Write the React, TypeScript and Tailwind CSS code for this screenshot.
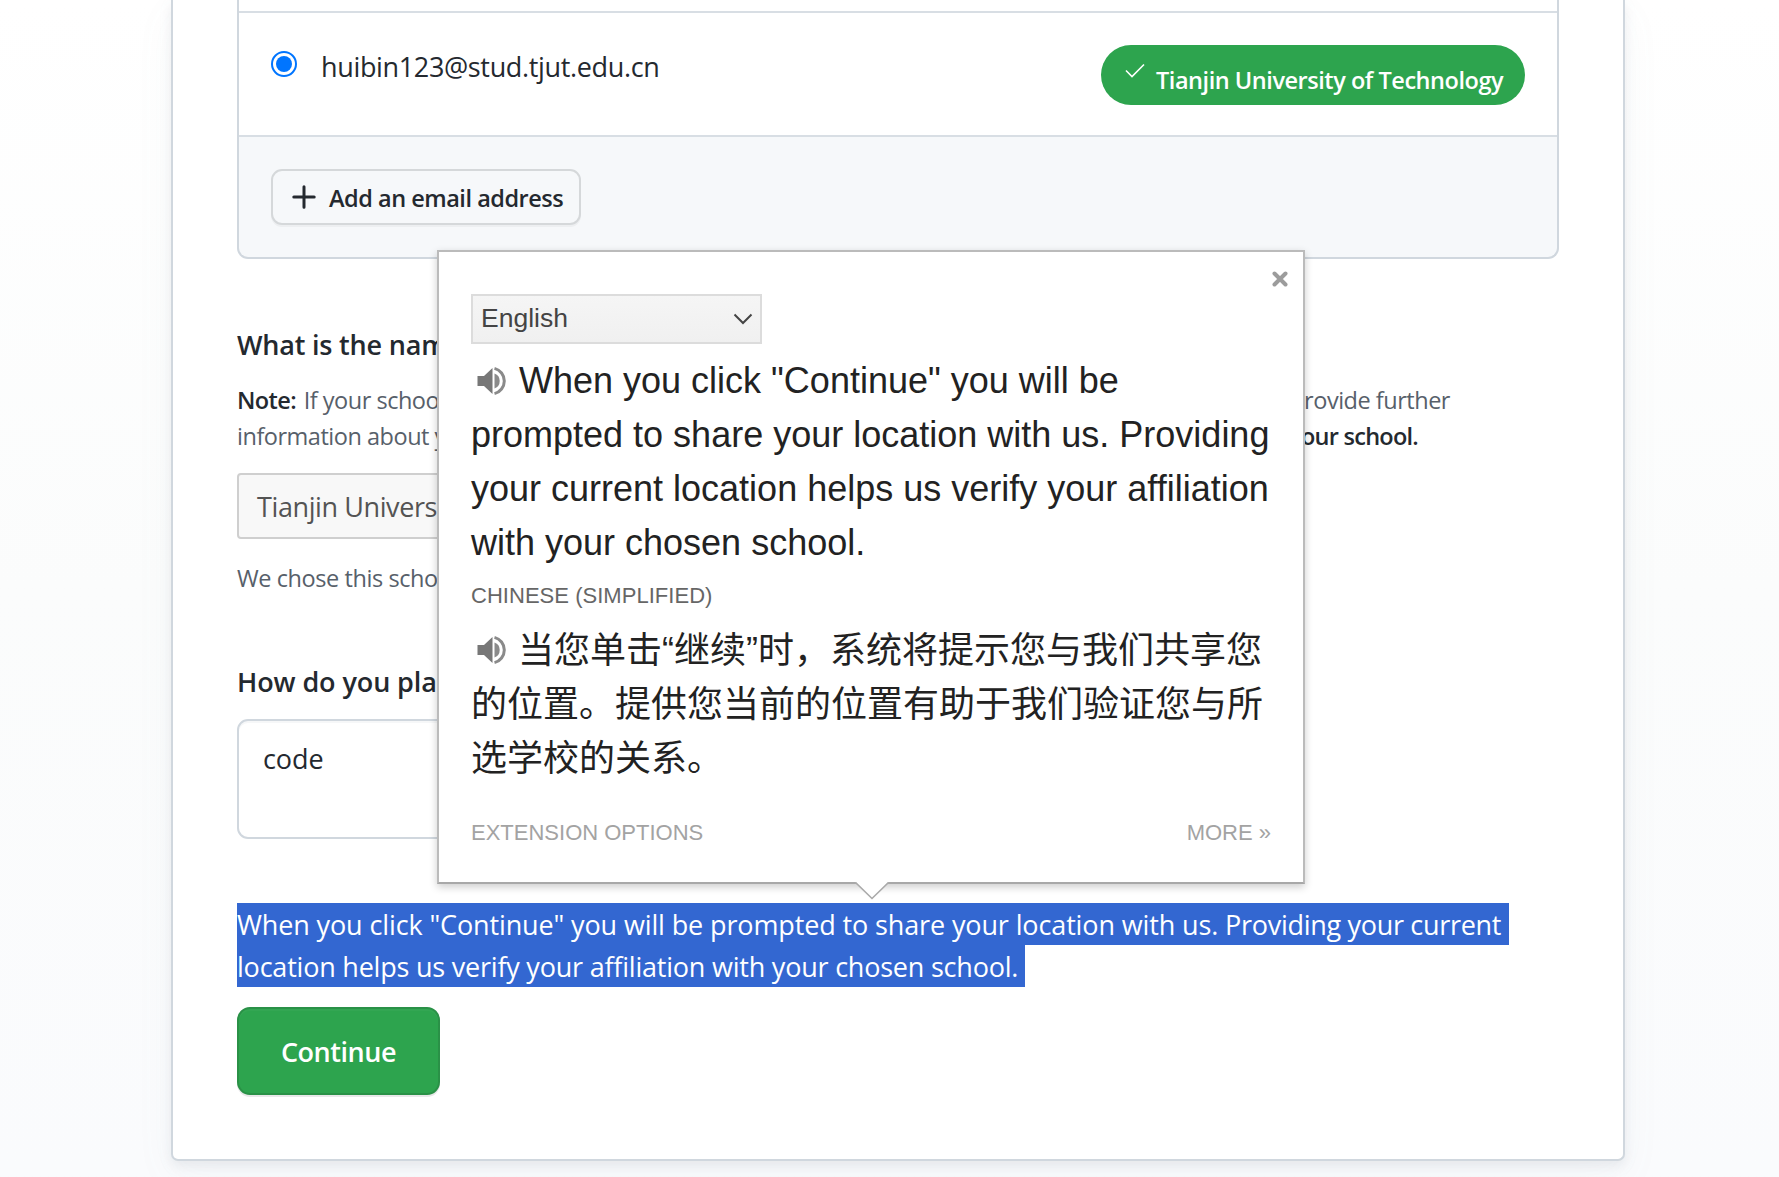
const sans = "font-['Open_Sans','Noto_Sans',sans-serif]";
const popupFont = "font-['Liberation_Sans','Noto_Sans_CJK_SC',sans-serif]";

function Speaker() {
  return (
    <svg className="mr-[10px] ml-[6px] shrink-0" width="32" height="32" viewBox="0 0 32 32" fill="none">
      <path d="M0.5 11h6.500l8.500-8v26l-8.500-8H0.500z" fill="#777" />
      <path d="M17.500 8.500a8 8 0 0 1 0 15z" fill="#8a8a8a" />
      <path d="M17.500 3.400a13 13 0 0 1 0 25.200" stroke="#8a8a8a" strokeWidth="3" />
    </svg>
  );
}

function EmailBox() {
  return (
    <div className="h-[259px] w-[1322px] overflow-hidden rounded-b-[11px] border-2 border-t-0 border-[#d0d7de] bg-[#f6f8fa]">
      <div className="h-[11px] bg-white" />
      <div className="flex h-[126px] items-start justify-between border-y-2 border-[#d8dee4] bg-white pr-[32px] pl-[32px]">
        <div className="flex items-start">
          <span className="mt-[38px] flex size-[26px] items-center justify-center rounded-full border-2 border-[#0075ff]">
            <span className="size-4 rounded-full bg-[#0075ff]" />
          </span>
          <span className="mt-[33px] ml-[24px] text-[27px] leading-[42px] tracking-[-0.35px] whitespace-nowrap">huibin123@stud.tjut.edu.cn</span>
        </div>
        <div className="mt-8 flex h-[60px] w-[424px] items-start rounded-full bg-[#2da44e] text-white">
          <svg className="mt-[18px] ml-[24px] shrink-0" width="20" height="17" viewBox="0 0 20 17" fill="none">
            <path d="M1 7.500l6 6L19 1.500" stroke="white" strokeWidth="1.6" />
          </svg>
          <span className="mt-[17px] ml-[11px] text-[23.5px] leading-[36px] font-semibold tracking-[-0.46px] whitespace-nowrap">Tianjin University of Technology</span>
        </div>
      </div>
      <div className="pt-8 pl-8">
        <button className="flex h-[56px] w-[310px] items-center rounded-[11px] border-2 border-[#d5d8da] bg-[#f6f8fa] pl-[19px] shadow-[0_2px_0_rgba(27,31,36,0.04)]">
          <svg width="24" height="24" viewBox="0 0 24 24" fill="none">
            <path d="M12 1.800v20.400M1.800 12h20.400" stroke="#24292f" strokeWidth="3" strokeLinecap="round" />
          </svg>
          <span className="mt-[2px] ml-[13px] text-[23.5px] leading-[36px] font-semibold tracking-[-0.48px] whitespace-nowrap">Add an email address</span>
        </button>
      </div>
    </div>
  );
}

function TranslatePopup() {
  return (
    <div className={`absolute top-[250px] left-[437px] flex h-[634px] w-[868px] flex-col border-2 border-[#bbb] border-b-[#a8a8a8] bg-white px-[32px] text-[#222] shadow-[0_3px_8px_rgba(0,0,0,0.2)] ${popupFont}`}>
      <svg className="absolute top-[19px] right-[15px]" width="16" height="16" viewBox="0 0 16 16">
        <path d="M2.500 2.500l11 11M13.500 2.500l-11 11" stroke="#9c9c9c" strokeWidth="4" strokeLinecap="round" />
      </svg>
      <div className="mt-[42px] flex h-[50px] w-[291px] items-center justify-between border-2 border-[#dcdcdc] bg-linear-to-b from-[#f5f5f5] to-[#f0f0f0] pr-[7px] pl-[8px] text-[#444]">
        <span className="-mt-[2px] text-[26.5px] leading-[36px]">English</span>
        <svg width="20" height="12" viewBox="0 0 20 12" fill="none">
          <path d="M1.500 1.500L10 10l8.500-8.500" stroke="#444" strokeWidth="2" />
        </svg>
      </div>
      <div className="mt-[10px] text-[36px] leading-[54px] whitespace-nowrap">
        <div className="flex h-[54px] items-center"><Speaker />When you click "Continue" you will be</div>
        <div className="h-[54px]">prompted to share your location with us. Providing</div>
        <div className="h-[54px]">your current location helps us verify your affiliation</div>
        <div className="h-[54px]">with your chosen school.</div>
      </div>
      <div className="mt-[13px] text-[22px] leading-[26px] tracking-[0.03px] text-[#666]">CHINESE (SIMPLIFIED)</div>
      <div className="mt-[15px] text-[36px] leading-[54px] whitespace-nowrap">
        <div className="flex h-[54px] items-center"><span className="-mt-[2px] flex"><Speaker /></span><span className="-ml-px">当您单击“继续”时，系统将提示您与我们共享您</span></div>
        <div className="h-[54px]">的位置。提供您当前的位置有助于我们验证您与所</div>
        <div className="h-[54px]">选学校的关系。</div>
      </div>
      <div className="mt-[34px] flex justify-between text-[22px] leading-[26px] text-[#a3a3a3]">
        <span>EXTENSION OPTIONS</span>
        <span>MORE »</span>
      </div>
      <svg className="absolute bottom-[-18px] left-[415px]" width="36" height="18" viewBox="0 0 36 18">
        <path d="M1.500 0L18 16.500L34.500 0z" fill="white" />
        <path d="M1.500 0.500L18 16.500L34.500 0.500" fill="none" stroke="#aaa" strokeWidth="1.600" />
      </svg>
    </div>
  );
}

export default function App() {
  return (
    <div className={`relative h-[1177px] w-[1779px] overflow-hidden bg-linear-to-b from-white via-[#fbfcfc] to-[#fafbfd] text-[#24292f] ${sans}`}>
      <main className="ml-[171px] h-[1161px] w-[1454px] rounded-b-[7px] border-2 border-t-0 border-[#d0d7de] bg-white pl-[64px] shadow-[0_5px_12px_rgba(140,149,159,0.15),0_14px_42px_rgba(140,149,159,0.05)]">
        <EmailBox />
        <h2 className="mt-[66px] text-[27px] leading-[40px] font-semibold tracking-[-0.2px] whitespace-nowrap">What is the name</h2>
        <div className="mt-[17px] text-[23.5px] leading-[36px] tracking-[-0.48px] whitespace-nowrap text-[#57606a]">
          <p className="flex w-[1213px] justify-between">
            <span><b className="mr-[2px] font-semibold tracking-[-0.600px] text-[#24292f]">Note:</b> If your school</span>
            <span>provide further</span>
          </p>
          <p className="flex w-[1181px] justify-between">
            <span>information about your</span>
            <b className="font-semibold tracking-[-0.750px] text-[#24292f]">your school.</b>
          </p>
        </div>
        <div className="mt-[19px] flex h-[66px] w-[700px] items-center rounded-[4px] border-2 border-[#cfcfcf] bg-[#f8f8f8] pl-[18px] text-[27px] leading-[40px] tracking-[-0.4px] whitespace-nowrap text-[#545454]">
          <span className="mt-px">Tianjin University</span>
        </div>
        <p className="mt-[21px] text-[23.5px] leading-[36px] tracking-[-0.42px] whitespace-nowrap text-[#57606a]">We chose this school</p>
        <h2 className="mt-[66px] text-[27px] leading-[40px] font-semibold tracking-[-0.1px] whitespace-nowrap">How do you plan</h2>
        <div className="mt-[17px] h-[120px] w-[900px] rounded-[11px] border-2 border-[#d0d7de] bg-white pt-[17px] pl-[24px] text-[27px] leading-[42px] tracking-[-0.1px] shadow-[inset_0_2px_0_rgba(208,215,222,0.2)]">code</div>
        <p className="mt-[64px] flex flex-col items-start text-[27px] leading-[42px] whitespace-pre text-white">
          <span className="h-[42px] w-[1272px] bg-[#3367d1] pt-px leading-[41px] tracking-[-0.125px]">When you click "Continue" you will be prompted to share your location with us. <span className="tracking-[-0.300px]">Providing your current </span></span>
          <span className="h-[42px] w-[788px] bg-[#3367d1] pt-px leading-[41px] tracking-[-0.215px]">location helps us verify your affiliation with your chosen school. </span>
        </p>
        <button className="mt-[20px] flex h-[88px] w-[203px] items-center justify-center rounded-[13px] border-2 border-[#2a9147] bg-[#2da44e] pt-[2px] text-[27px] leading-[40px] font-semibold tracking-[-0.45px] text-white shadow-[0_2px_0_rgba(27,31,36,0.1),inset_0_2px_0_rgba(255,255,255,0.03)]">Continue</button>
      </main>
      <TranslatePopup />
    </div>
  );
}
